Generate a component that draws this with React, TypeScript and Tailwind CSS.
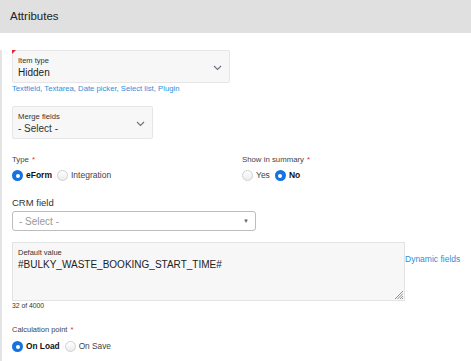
import React from "react";

const font = { fontFamily: '"Liberation Sans", Arial, sans-serif' };

function Chevron() {
  return (
    <svg width="9" height="6" viewBox="0 0 9 6" className="text-gray-500">
      <path d="M1 1l3.5 3.5L8 1" fill="none" stroke="currentColor" strokeWidth="1.1" />
    </svg>
  );
}

function Radio({ checked, label, bold, size = "text-[8.5px]" }: { checked?: boolean; label: string; bold?: boolean; size?: string }) {
  return (
    <label className="flex h-[11px] items-center gap-[3px]">
      {checked ? (
        <span className="flex h-[11px] w-[11px] items-center justify-center rounded-full bg-[#1672e0]">
          <span className="h-[4px] w-[4px] rounded-full bg-white" />
        </span>
      ) : (
        <span className="h-[11px] w-[11px] rounded-full border border-[#d0d0d0] bg-gradient-to-b from-white to-[#ececec]" />
      )}
      <span className={`${size} leading-[11px] ${bold ? "font-bold text-[#111]" : "text-[#444]"}`}>{label}</span>
    </label>
  );
}

function Req() {
  return <span className="ml-[3px] text-[#e0322b]">*</span>;
}

export default function App() {
  return (
    <div className="h-[361px] w-[471px] overflow-hidden bg-white" style={font}>
      {/* Header */}
      <div className="flex h-[33px] items-center bg-[#e0e0e0] pl-[10px] text-[11.5px] text-[#222]">Attributes</div>

      <div className="h-[328px] border-l-2 border-[#e4e4e4] pl-[10px]">
        {/* Item type */}
        <div className="relative mt-[17px] flex h-[33px] w-[218px] items-start justify-between rounded-[2px] border border-[#e6e6e6] bg-[#f7f7f7] pl-[5px] pr-[7px] pt-[5px]">
          <svg width="4" height="4" viewBox="0 0 4 4" className="absolute -left-px -top-px">
            <path d="M0 0h4L0 4z" fill="#e8232b" />
          </svg>
          <div className="flex flex-col">
            <span className="text-[7.5px] leading-[9px] text-[#333]">Item type</span>
            <span className="mt-[2px] text-[10px] leading-[12px] text-[#222]">Hidden</span>
          </div>
          <div className="mt-[9px]">
            <Chevron />
          </div>
        </div>
        <div className="mt-[1px] text-[7.7px] leading-[10px] text-[#2d8fe0]">
          Textfield<span className="text-[#666]">, </span>Textarea<span className="text-[#666]">, </span>Date picker
          <span className="text-[#666]">, </span>Select list<span className="text-[#666]">, </span>Plugin
        </div>

        {/* Merge fields */}
        <div className="mt-[12px] flex h-[33px] w-[141px] items-start justify-between rounded-[2px] border border-[#e6e6e6] bg-[#f7f7f7] pl-[5px] pr-[7px] pt-[5px]">
          <div className="flex flex-col">
            <span className="text-[7.7px] leading-[9px] text-[#333]">Merge fields</span>
            <span className="mt-[2px] text-[10px] leading-[12px] text-[#333]">- Select -</span>
          </div>
          <div className="mt-[9px]">
            <Chevron />
          </div>
        </div>

        {/* Type / Show in summary */}
        <div className="mt-[16px] grid grid-cols-[230px_1fr]">
          <div>
            <div className="text-[7.8px] leading-[10px] text-[#444]">
              Type<Req />
            </div>
            <div className="mt-[5px] flex gap-[5px]">
              <Radio checked bold label="eForm" />
              <Radio label="Integration" />
            </div>
          </div>
          <div>
            <div className="text-[7.8px] leading-[10px] text-[#444]">
              Show in summary<Req />
            </div>
            <div className="mt-[5px] flex gap-[5px]">
              <Radio label="Yes" />
              <Radio checked bold label="No" />
            </div>
          </div>
        </div>

        {/* CRM field */}
        <div className="mt-[16px] text-[9.5px] leading-[12px] text-[#333]">CRM field</div>
        <div className="mt-[2px] flex h-[20px] w-[244px] items-center justify-between rounded-[3px] border border-[#bdbdbd] bg-white pl-[6px] pr-[6px]">
          <span className="text-[10px] text-[#999]">- Select -</span>
          <span className="text-[6px] text-[#666]">▼</span>
        </div>

        {/* Default value */}
        <div className="mt-[11px] flex items-start">
          <div className="relative h-[59px] w-[393px] border border-[#e3e3e3] bg-[#f7f7f7] pl-[5px] pt-[5px]">
            <div className="text-[7.5px] leading-[9px] text-[#333]">Default value</div>
            <div className="mt-[2px] text-[10px] leading-[12px] text-[#222]">#BULKY_WASTE_BOOKING_START_TIME#</div>
            <svg width="9" height="9" viewBox="0 0 9 9" className="absolute bottom-[1px] right-[1px]">
              <path d="M9 1L1 9M9 3.5L3.5 9M9 6L6 9M9 8L8 9" stroke="#777" strokeWidth="0.8" />
            </svg>
          </div>
          <span className="mt-[12px] text-[8.5px] leading-[10px] text-[#2d8fe0]">Dynamic fields</span>
        </div>
        <div className="mt-[1px] text-[6.8px] leading-[8px] text-[#333]">32 of 4000</div>

        {/* Calculation point */}
        <div className="mt-[15px] text-[7.5px] leading-[10px] text-[#444]">
          Calculation point<Req />
        </div>
        <div className="mt-[6px] flex gap-[5px]">
          <Radio checked bold label="On Load" size="text-[8.3px]" />
          <Radio label="On Save" size="text-[8.3px]" />
        </div>
      </div>
    </div>
  );
}
